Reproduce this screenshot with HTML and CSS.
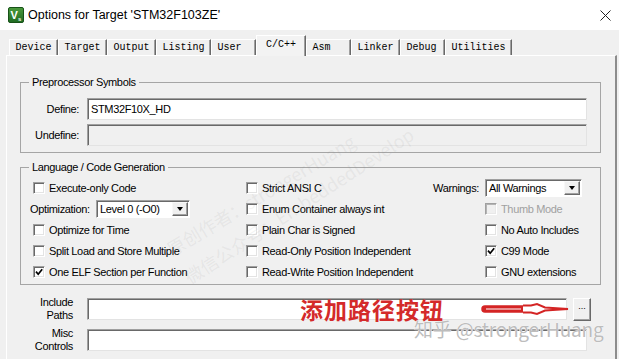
FILE: index.html
```html
<!DOCTYPE html>
<html>
<head>
<meta charset="utf-8">
<title>Options for Target</title>
<link rel="stylesheet" href="styles.css">
</head>
<body>
<div class="window">
  <div class="titlebar">
    <svg class="app-icon" viewBox="0 0 16 16">
      <defs><linearGradient id="ig" x1="0" y1="0" x2="0" y2="1"><stop offset="0" stop-color="#4b9a3c"/><stop offset="1" stop-color="#1f6a22"/></linearGradient></defs>
      <rect x="0.5" y="0.5" width="15" height="15" rx="1.5" fill="url(#ig)" stroke="#175218"/>
      <text x="2.5" y="12" font-family="Liberation Sans" font-weight="bold" font-size="11" fill="#fff">V</text>
      <text x="10" y="14" font-family="Liberation Sans" font-weight="bold" font-size="6" fill="#fff">s</text>
    </svg>
    <span class="title">Options for Target 'STM32F103ZE'</span>
    <svg class="close" viewBox="0 0 11 11"><path d="M0.5 0.5 L10.5 10.5 M10.5 0.5 L0.5 10.5" stroke="#222" stroke-width="1"/></svg>
  </div>

  <div class="tabs">
    <div class="tab">Device</div>
    <div class="tab">Target</div>
    <div class="tab">Output</div>
    <div class="tab">Listing</div>
    <div class="tab">User</div>
    <div class="tab active">C/C++</div>
    <div class="tab">Asm</div>
    <div class="tab">Linker</div>
    <div class="tab">Debug</div>
    <div class="tab">Utilities</div>
  </div>

  <div class="panel">
    <fieldset class="group g1">
      <legend>Preprocessor Symbols</legend>
      <div class="sym-row"><span class="lbl">Define:</span><div class="input">STM32F10X_HD</div></div>
      <div class="sym-row"><span class="lbl">Undefine:</span><div class="input disabled"></div></div>
    </fieldset>

    <fieldset class="group g2">
      <legend>Language / Code Generation</legend>
      <div class="opts">
        <div class="cell c1"><span class="cb"></span><span>Execute-only Code</span></div>
        <div class="cell c2"><span class="cb"></span><span>Strict ANSI C</span><span class="warn-lbl">Warnings:</span></div>
        <div class="cell c3"><div class="select wsel"><span>All Warnings</span><span class="dd"></span></div></div>

        <div class="cell c1o"><span class="opt-lbl">Optimization:</span><div class="select osel"><span>Level 0 (-O0)</span><span class="dd"></span></div></div>
        <div class="cell c2"><span class="cb"></span><span>Enum Container always int</span></div>
        <div class="cell c3 disabled-item"><span class="cb off"></span><span>Thumb Mode</span></div>

        <div class="cell c1"><span class="cb"></span><span>Optimize for Time</span></div>
        <div class="cell c2"><span class="cb"></span><span>Plain Char is Signed</span></div>
        <div class="cell c3"><span class="cb"></span><span>No Auto Includes</span></div>

        <div class="cell c1"><span class="cb"></span><span>Split Load and Store Multiple</span></div>
        <div class="cell c2"><span class="cb"></span><span>Read-Only Position Independent</span></div>
        <div class="cell c3"><span class="cb on"><svg viewBox="0 0 8 8"><path d="M1 3.6 L3.2 6.2 L7.2 1.2" fill="none" stroke="#000" stroke-width="1.7"/></svg></span><span>C99 Mode</span></div>

        <div class="cell c1"><span class="cb on"><svg viewBox="0 0 8 8"><path d="M1 3.6 L3.2 6.2 L7.2 1.2" fill="none" stroke="#000" stroke-width="1.7"/></svg></span><span>One ELF Section per Function</span></div>
        <div class="cell c2"><span class="cb"></span><span>Read-Write Position Independent</span></div>
        <div class="cell c3"><span class="cb"></span><span>GNU extensions</span></div>
      </div>
    </fieldset>

    <div class="paths">
      <div class="path-row">
        <div class="plabel">Include<br>Paths</div>
        <div class="input inc"></div>
        <div class="btn">...</div>
      </div>
      <div class="path-row">
        <div class="plabel">Misc<br>Controls</div>
        <div class="input misc"></div>
      </div>
    </div>
  </div>

  <div class="wm-diag wm1">原创作者：strongerHuang</div>
  <div class="wm-diag wm2">微信公众号：EmbeddedDevelop</div>

  <div class="annot">添加路径按钮</div>
  <svg class="red-arrow" viewBox="0 0 92 18">
    <path d="M6 6 H44 V12 H6 A3 3 0 0 1 6 6 Z" fill="#d42424" stroke="#d42424" stroke-width="1.5"/>
    <path d="M44 5.5 H52 L58 4 L66 7.5 L89 9 L66 10.5 L58 14 L52 12.5 H44" fill="#fff" stroke="#d42424" stroke-width="2"/>
    <path d="M7 9 H42" stroke="#fff" stroke-width="1"/>
  </svg>
  <div class="wm-zhihu">知乎 @strongerHuang</div>
</div>
</body>
</html>
```

FILE: styles.css
```css
* { box-sizing: border-box; }
html, body { margin: 0; padding: 0; }
body {
  width: 619px;
  height: 359px;
  overflow: hidden;
  background: #f0f0f0;
  font-family: "Liberation Sans", Arial, sans-serif;
  font-size: 11px;
  letter-spacing: -0.35px;
  color: #000;
}
.window { position: relative; width: 619px; height: 359px; }

/* title bar */
.titlebar {
  height: 30px;
  background: #fff;
  display: flex;
  align-items: center;
  padding: 0 8px;
}
.app-icon { width: 16px; height: 16px; flex: none; }
.title { margin-left: 4px; font-size: 12.5px; letter-spacing: 0; color: #000; }
.close { margin-left: auto; width: 11px; height: 11px; }

/* tabs */
.tabs {
  display: flex;
  align-items: flex-end;
  height: 25px;
  padding-left: 9px;
  position: relative;
  z-index: 1;
}
.tab {
  height: 16px;
  min-width: 45px;
  padding: 1px 5.5px 0;
  font-family: "Liberation Mono", "DejaVu Sans Mono", monospace;
  font-size: 10px;
  letter-spacing: 0;
  line-height: 14px;
  border-top: 1px solid #fff;
  border-left: 1px solid #fff;
  border-right: 1px solid #696969;
  box-shadow: inset -1px 0 0 #a0a0a0;
  background: #f0f0f0;
}
.tab.active {
  height: 21px;
  margin-bottom: -1px;
  padding: 2px 9px 0;
  background: #f3f3f3;
}

/* panel */
.panel {
  height: 304px;
  margin: 0 2px 0 6px;
  border-top: 1px solid #fff;
  border-left: 1px solid #fff;
  border-right: 2px solid #8c8c8c;
  padding: 20px 14px 0 13px;
}

.group {
  margin: 0;
  min-width: 0;
  border: 1px solid #a5a5a5;
  padding: 9px 13px 6px 8px;
}
.group legend {
  padding: 0 3px;
  line-height: 13px;
}
.g2 { margin-top: 8px; padding: 3px 13px 2px 8px; }

.sym-row {
  display: grid;
  grid-template-columns: 50px 1fr;
  column-gap: 8px;
  align-items: center;
  height: 22px;
}
.sym-row + .sym-row { margin-top: 4px; }
.lbl { text-align: right; }

.input {
  height: 22px;
  background: #fff;
  border: 1px solid;
  border-color: #a0a0a0 #e3e3e3 #e3e3e3 #a0a0a0;
  box-shadow: inset 1px 1px 0 #696969;
  padding: 3px 0 0 3px;
  line-height: 15px;
}
.input.disabled { background: #f0f0f0; }

/* options grid */
.opts {
  display: grid;
  grid-template-columns: 217px 238px 1fr;
  grid-auto-rows: 21px;
  align-items: center;
}
.cell { display: flex; align-items: center; gap: 4px; white-space: nowrap; }
.c1 { padding-left: 4px; }
.c3 { padding-left: 1px; }
.c1o { padding-left: 1px; gap: 0; }
.warn-lbl { margin-left: auto; margin-right: 5px; }
.opt-lbl { width: 66px; }
.disabled-item { color: #a0a0a0; }

.cb {
  width: 12px;
  height: 12px;
  flex: none;
  background: #fff;
  border: 1px solid;
  border-color: #a0a0a0 #fff #fff #a0a0a0;
  box-shadow: inset 1px 1px 0 #696969, inset -1px -1px 0 #e3e3e3;
  display: flex;
  align-items: center;
  justify-content: center;
}
.cb.off { background: #f0f0f0; box-shadow: inset 1px 1px 0 #b4b4b4, inset -1px -1px 0 #e8e8e8; }
.cb svg { width: 8px; height: 8px; }

.select {
  display: flex;
  align-items: center;
  height: 18px;
  background: #fff;
  border: 1px solid;
  border-color: #a0a0a0 #fff #fff #a0a0a0;
  box-shadow: inset 1px 1px 0 #696969;
  padding-left: 3px;
}
.wsel { width: 97px; }
.osel { width: 94px; }
.dd {
  margin-left: auto;
  margin-right: 1px;
  width: 16px;
  height: 14px;
  background: #f0f0f0;
  border: 1px solid;
  border-color: #f8f8f8 #696969 #696969 #f8f8f8;
  box-shadow: inset -1px -1px 0 #a0a0a0;
  display: flex;
  align-items: center;
  justify-content: center;
}
.dd::after {
  content: "";
  border-left: 3.5px solid transparent;
  border-right: 3.5px solid transparent;
  border-top: 4px solid #000;
}

/* path rows */
.paths { margin-top: 11px; display: flex; flex-direction: column; gap: 5px; }
.path-row { display: flex; align-items: center; height: 26px; }
.plabel { width: 53px; margin-right: 14px; text-align: right; line-height: 13px; }
.input.inc { width: 480px; }
.input.misc { width: 500px; }
.btn {
  margin-left: 6px;
  width: 18px;
  height: 23px;
  background: #f0f0f0;
  border: 1px solid;
  border-color: #fff #696969 #696969 #fff;
  box-shadow: inset -1px -1px 0 #a0a0a0;
  font-size: 9px;
  letter-spacing: 0;
  line-height: 14px;
  text-align: center;
}

/* annotations & watermarks */
.annot {
  position: absolute;
  left: 300px;
  top: 296px;
  height: 26px;
  line-height: 26px;
  font-family: "Noto Sans CJK SC", sans-serif;
  font-weight: bold;
  font-size: 23px;
  letter-spacing: 1px;
  color: #d42a2a;
  white-space: nowrap;
}
.red-arrow { position: absolute; left: 479px; top: 300px; width: 92px; height: 18px; }
.wm-zhihu {
  position: absolute;
  left: 414px;
  top: 317px;
  font-family: "Noto Sans CJK SC", sans-serif;
  font-size: 19px;
  line-height: 24px;
  letter-spacing: -0.2px;
  color: #bdbdbd;
  text-shadow: 0 0 1px #fff, 0 0 1px #fff;
  white-space: nowrap;
}
.wm-diag {
  position: absolute;
  font-family: "Noto Sans CJK SC", sans-serif;
  font-size: 18px;
  letter-spacing: 0;
  line-height: 20px;
  color: rgba(140, 140, 140, 0.11);
  white-space: nowrap;
  transform-origin: left center;
  pointer-events: none;
}
.wm1 { left: 168px; top: 240px; transform: rotate(-31deg); }
.wm2 { left: 186px; top: 268px; transform: rotate(-33deg); }
```
